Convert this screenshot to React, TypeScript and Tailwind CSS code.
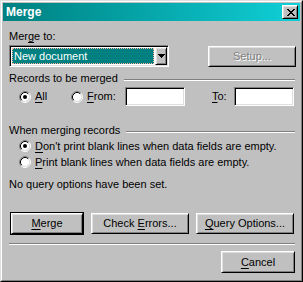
import React from 'react';

const raised =
  'border border-t-white border-l-white border-r-black border-b-black shadow-[inset_1px_1px_0_#dfdfdf,inset_-1px_-1px_0_#808080] bg-[#c0c0c0]';
const sunken =
  'border border-t-[#808080] border-l-[#808080] border-r-white border-b-white shadow-[inset_1px_1px_0_#000,inset_-1px_-1px_0_#dfdfdf] bg-white';

function U({ children }: { children: React.ReactNode }) {
  return <span className="underline decoration-1 underline-offset-[2px]">{children}</span>;
}

function Radio({ checked }: { checked?: boolean }) {
  return (
    <svg width="12" height="12" viewBox="0 0 12 12" className="shrink-0">
      <circle cx="6" cy="6" r="4.5" fill="#fff" />
      <path d="M2.11 9.89 A5.5 5.5 0 0 1 9.89 2.11" fill="none" stroke="#808080" />
      <path d="M9.89 2.11 A5.5 5.5 0 0 1 2.11 9.89" fill="none" stroke="#fff" />
      <path d="M2.82 9.18 A4.5 4.5 0 0 1 9.18 2.82" fill="none" stroke="#000" />
      <path d="M9.18 2.82 A4.5 4.5 0 0 1 2.82 9.18" fill="none" stroke="#dfdfdf" />
      {checked && <circle cx="6" cy="6" r="2" fill="#000" />}
    </svg>
  );
}

const closeGlyph = ['11....11', '.11..11.', '..1111..', '...11...', '..1111..', '.11..11.', '11....11'];

function CloseX() {
  return (
    <svg width="8" height="7" viewBox="0 0 8 7" shapeRendering="crispEdges">
      {closeGlyph.map((row, y) =>
        row.split('').map((c, x) => (c === '1' ? <rect key={`${x}-${y}`} x={x} y={y} width="1" height="1" fill="#000" /> : null))
      )}
    </svg>
  );
}

function GroupHeader({ title }: { title: string }) {
  return (
    <div className="flex h-[13px] items-start gap-[6px]">
      <span className="whitespace-nowrap">{title}</span>
      <div className="mt-[7px] h-[2px] flex-1 border-t border-b border-t-[#808080] border-b-white" />
    </div>
  );
}

export default function App() {
  return (
    <div className="h-[282px] w-[303px] border border-t-[#dfdfdf] border-l-[#dfdfdf] border-r-black border-b-black bg-[#c0c0c0] font-['Liberation_Sans',Arial,sans-serif] text-[11px] leading-[13px] text-black">
      <div className="flex h-full flex-col border border-t-white border-l-white border-r-[#808080] border-b-[#808080] p-[1px]">
        {/* title bar */}
        <div className="flex h-[18px] shrink-0 items-center justify-between bg-gradient-to-r from-[#008080] to-[#10d0d8] pl-[3px] pr-[2px]">
          <span className="text-[12px] leading-[18px] font-bold text-white">Merge</span>
          <div className={`${raised} flex h-[14px] w-[16px] items-center justify-center pl-[1px]`}>
            <CloseX />
          </div>
        </div>

        <div className="flex flex-1 flex-col pl-[6px] pr-[5px]">
          <div className="mt-[9px] flex items-end justify-between">
            <div className="flex flex-col">
              <span>
                Mer<U>g</U>e to:
              </span>
              <div className={`${sunken} mt-[2px] flex h-[22px] w-[160px] p-[1px]`}>
                <div className="flex flex-1 p-[1px]">
                  <div className="flex h-[16px] flex-1 items-center border border-dotted border-[#ffb0a0] bg-[#008080] pl-[1px] text-white">
                    New document
                  </div>
                </div>
                <div className={`${raised} flex h-[18px] w-[12px] items-center justify-center`}>
                  <svg width="7" height="4" viewBox="0 0 7 4" shapeRendering="crispEdges">
                    <path d="M0 0h7v1h-1v1h-1v1h-1v1h-1v-1h-1v-1h-1v-1h-1z" fill="#000" />
                  </svg>
                </div>
              </div>
            </div>
            <div className={`${raised} mr-[-1px] flex h-[21px] w-[88px] items-center justify-center text-[#808080] [text-shadow:1px_1px_0_#fff]`}>
              Setup...
            </div>
          </div>

          <div className="mt-[5px]">
            <GroupHeader title="Records to be merged" />
          </div>
          <div className="mt-[2px] flex h-[19px] items-center">
            <div className="ml-[10px] flex w-[52px] items-center gap-[4px]">
              <Radio checked />
              <span>
                <U>A</U>ll
              </span>
            </div>
            <div className="flex w-[54px] items-center gap-[4px]">
              <Radio />
              <span>
                <U>F</U>rom:
              </span>
            </div>
            <div className={`${sunken} h-[19px] w-[60px]`} />
            <span className="ml-[27px] w-[22px]">
              <U>T</U>o:
            </span>
            <div className={`${sunken} h-[19px] w-[60px]`} />
          </div>

          <div className="mt-[18px]">
            <GroupHeader title="When merging records" />
          </div>
          <div className="mt-[1px] flex flex-col">
            <div className="ml-[10px] flex h-[16px] items-center gap-[4px]">
              <Radio checked />
              <span>
                <U>D</U>on't print blank lines when data fields are empty.
              </span>
            </div>
            <div className="ml-[10px] flex h-[16px] items-center gap-[4px]">
              <Radio />
              <span>
                <U>P</U>rint blank lines when data fields are empty.
              </span>
            </div>
          </div>

          <span className="mt-[8px]">No query options have been set.</span>

          <div className="mt-[21px] flex h-[23px] items-center">
            <div className="ml-[1px] h-[23px] w-[74px] border border-black">
              <div className={`${raised} flex h-full w-full items-center justify-center`}>
                <span>
                  <U>M</U>erge
                </span>
              </div>
            </div>
            <div className={`${raised} ml-[7px] flex h-[21px] w-[98px] items-center justify-center`}>
              <span>
                Check <U>E</U>rrors...
              </span>
            </div>
            <div className={`${raised} ml-[7px] flex h-[21px] w-[98px] items-center justify-center`}>
              <span>
                <U>Q</U>uery Options...
              </span>
            </div>
          </div>

          <div className="mt-[8px] h-[2px] border-t border-b border-t-[#808080] border-b-white" />

          <div className={`${raised} mt-[6px] flex h-[22px] w-[74px] items-center justify-center self-end`}>
            <span>
              <U>C</U>ancel
            </span>
          </div>
        </div>
      </div>
    </div>
  );
}
